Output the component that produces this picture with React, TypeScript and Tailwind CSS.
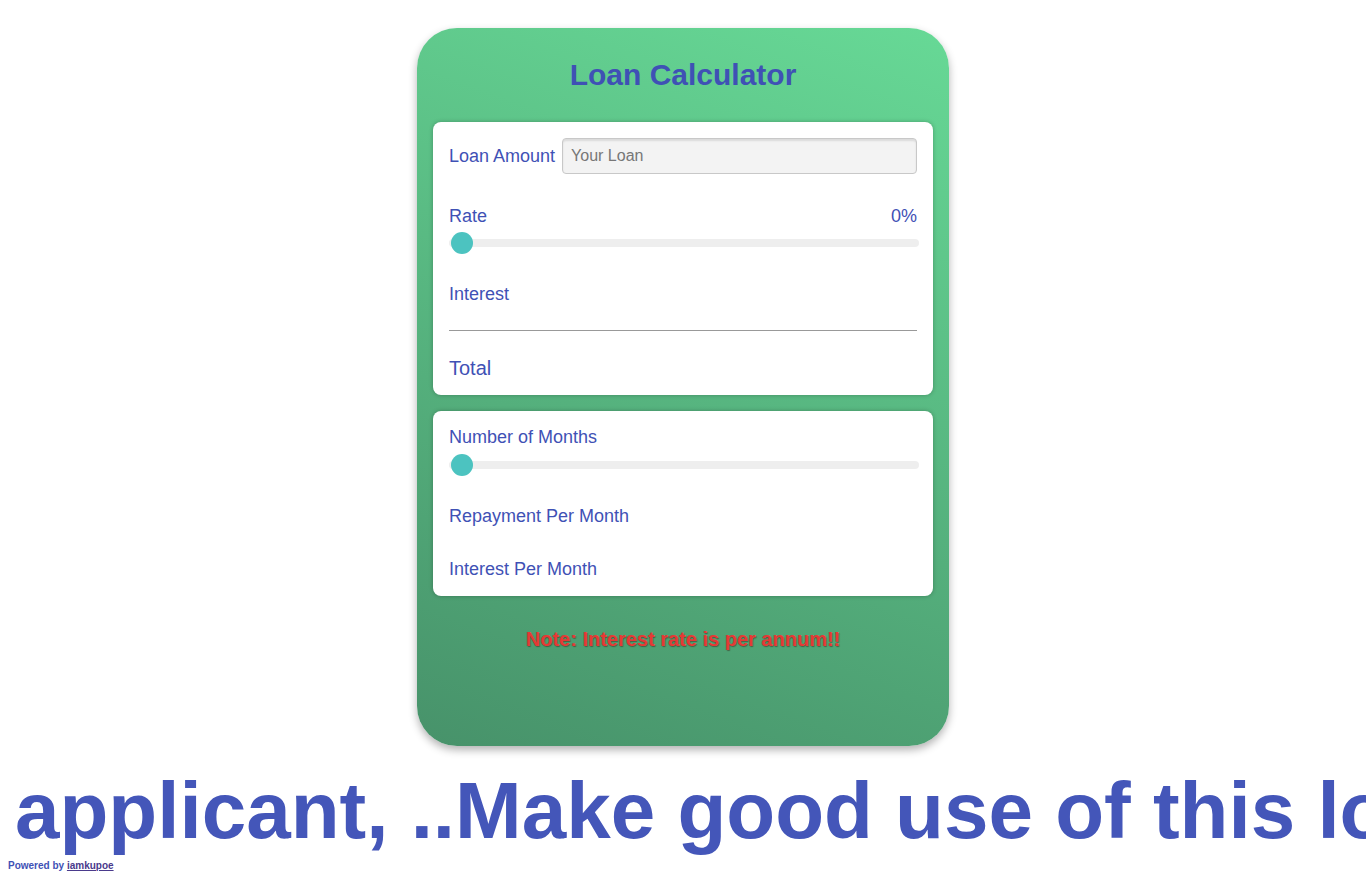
import React from 'react';

const font = { fontFamily: '"Liberation Sans", Arial, sans-serif' };

function Slider() {
  return (
    <div className="relative h-[22px] mr-[-2px] flex items-center">
      <div className="w-full h-[8px] rounded-full bg-[#eeeeee]" />
      <div className="absolute left-[2px] top-0 w-[22px] h-[22px] rounded-full bg-[#4cc3c0]" />
    </div>
  );
}

export default function App() {
  return (
    <div className="w-full h-[879px] overflow-hidden bg-white text-[#3f51b5]" style={font}>
      {/* Card */}
      <div className="mx-auto mt-[28px] w-[532px] h-[718px] rounded-[40px] bg-[linear-gradient(200deg,#67d996,#47926a)] shadow-[0_4px_8px_rgba(0,0,0,0.3)] px-[16px] pt-[30px]">
        <h1 className="text-[30px] leading-[34px] font-bold text-center text-[#3f51b5]">Loan Calculator</h1>

        {/* Loan panel */}
        <div className="mt-[30px] bg-white rounded-[8px] shadow-[0_0_4px_rgba(0,0,0,0.25)] px-[16px] pt-[16px] pb-[15px]">
          <div className="flex items-center h-[36px]">
            <span className="text-[18px] leading-[21px] whitespace-nowrap">Loan Amount</span>
            <input
              placeholder="Your Loan"
              className="ml-[7px] flex-1 h-[36px] rounded-[4px] border border-[#c8c8c8] bg-[#f3f3f3] shadow-[inset_0_2px_2px_rgba(0,0,0,0.1)] px-[8px] text-[16px] text-[#333] placeholder:text-[#777] outline-none"
              style={font}
            />
          </div>

          <div className="mt-[32px] flex justify-between text-[18px] leading-[21px]">
            <span>Rate</span>
            <span>0%</span>
          </div>
          <div className="mt-[5px]">
            <Slider />
          </div>

          <div className="mt-[30px] text-[18px] leading-[21px]">Interest</div>
          <div className="mt-[25px] border-t border-[#999]" />
          <div className="mt-[26px] text-[20px] leading-[23px]">Total</div>
        </div>

        {/* Months panel */}
        <div className="mt-[16px] bg-white rounded-[8px] shadow-[0_0_4px_rgba(0,0,0,0.25)] px-[16px] pt-[16px] pb-[16px]">
          <div className="text-[18px] leading-[21px]">Number of Months</div>
          <div className="mt-[6px]">
            <Slider />
          </div>
          <div className="mt-[30px] text-[18px] leading-[21px]">Repayment Per Month</div>
          <div className="mt-[32px] text-[18px] leading-[21px]">Interest Per Month</div>
        </div>

        <p className="mt-[32px] text-center text-[20px] leading-[23px] font-bold text-[#e53935] [text-shadow:1px_1px_1px_rgba(60,20,10,0.45)]">
          Note: Interest rate is per annum!!
        </p>
      </div>

      {/* Marquee-like banner */}
      <div className="mt-[19px] w-full overflow-hidden whitespace-nowrap pl-[15px] text-[80px] leading-[92px] font-bold text-[#4456b9]">
        applicant, ..Make good use of this loan
      </div>

      <div className="pl-[8px] mt-[3px] text-[10px] leading-[12px] font-bold text-[#3f51b5]">
        Powered by <a href="#" className="underline text-[#4a3a8c]">iamkupoe</a>
      </div>
    </div>
  );
}
